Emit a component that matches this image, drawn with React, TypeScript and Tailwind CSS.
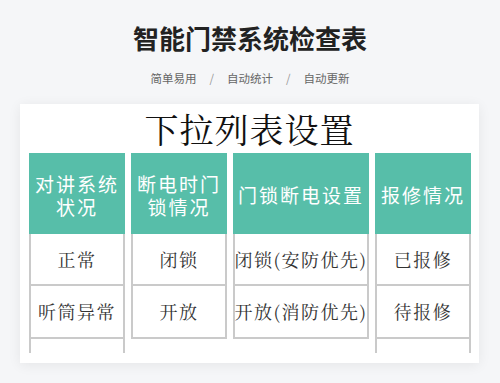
import React from 'react';

// 表の列データ
interface Column {
  header: string[];
  width: string;
  rows: string[];
  extend: boolean;
}

const columns: Column[] = [
  { header: ['对讲系统', '状况'], width: 'w-[96px]', rows: ['正常', '听筒异常'], extend: true },
  { header: ['断电时门', '锁情况'], width: 'w-[96px]', rows: ['闭锁', '开放'], extend: false },
  { header: ['门锁断电设置'], width: 'w-[136px]', rows: ['闭锁(安防优先)', '开放(消防优先)'], extend: false },
  { header: ['报修情况'], width: 'w-[96px]', rows: ['已报修', '待报修'], extend: true },
];

const sans = "font-['Noto_Sans_CJK_SC','Noto_Sans',sans-serif]";
const serif = "font-['Noto_Serif_CJK_SC','Liberation_Serif',serif]";

const App: React.FC = () => {
  return (
    <div className={`w-[500px] h-[383px] overflow-hidden bg-[#f5f6f8] ${sans}`}>
      <h1 className="pt-[21px] text-center text-[26px] leading-[34px] font-bold text-[#222]">
        智能门禁系统检查表
      </h1>
      <div className="mt-[14px] flex justify-center items-center gap-[13px] text-[11.5px] leading-[18px] text-[#666]">
        <span>简单易用</span>
        <span className="text-[#999]">/</span>
        <span>自动统计</span>
        <span className="text-[#999]">/</span>
        <span>自动更新</span>
      </div>

      <div className="mt-[17px] ml-[20px] w-[459px] h-[259px] bg-white shadow-[0_2px_12px_rgba(0,0,0,0.07)]">
        <div className={`h-[49px] flex items-center justify-center text-[34px] text-[#111] tracking-[1px] ${serif}`}>
          下拉列表设置
        </div>
        <div className="flex gap-[6px] pl-[9px]">
          {columns.map((col, i) => (
            <div key={i} className={`${col.width} flex flex-col`}>
              <div className="h-[81px] pt-[2px] bg-[#57bea9] text-white flex items-center justify-center">
                <p className="text-center text-[19px] leading-[23px] tracking-[2px]">
                  {col.header.map((line, j) => (
                    <React.Fragment key={j}>
                      {j > 0 && <br />}
                      {line}
                    </React.Fragment>
                  ))}
                </p>
              </div>
              {col.rows.map((row, j) => (
                <div
                  key={j}
                  className={`${j === 0 ? 'h-[52px]' : 'h-[53px]'} border-x-2 border-b-2 border-[#cacaca] flex items-center justify-center text-[18px] text-[#333] tracking-[1.5px] whitespace-nowrap ${serif}`}
                >
                  {row}
                </div>
              ))}
              {col.extend && <div className="h-[14px] border-x-2 border-[#cacaca]" />}
            </div>
          ))}
        </div>
      </div>
    </div>
  );
};

export default App;
